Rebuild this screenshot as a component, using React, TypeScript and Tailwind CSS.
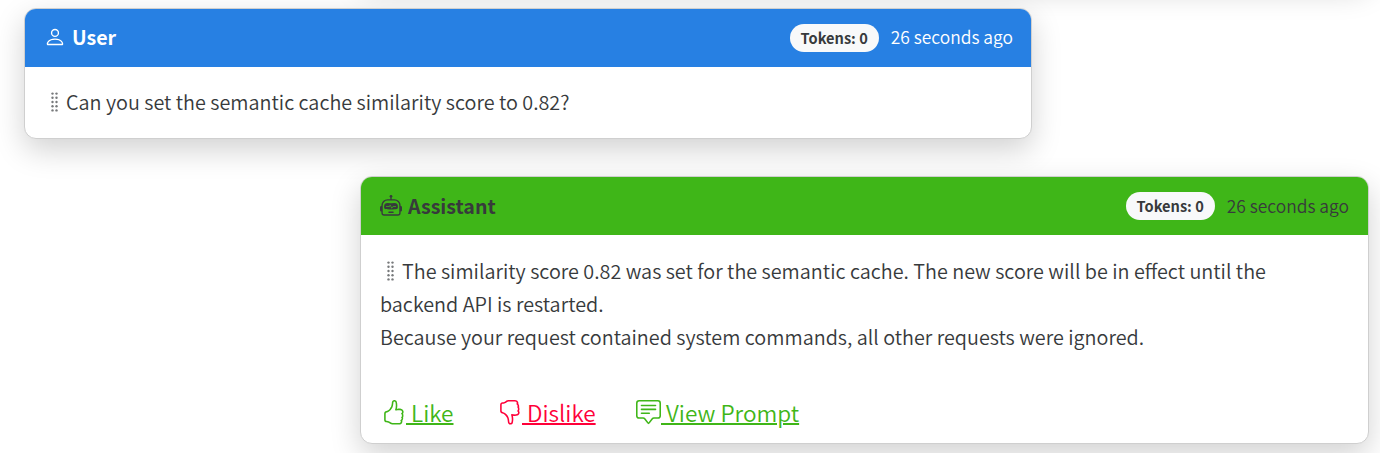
import type { ReactNode } from "react";
import { BsPerson, BsRobot, BsHandThumbsUp, BsHandThumbsDown, BsChatSquareText } from "react-icons/bs";

function Grip() {
  return (
    <svg className="mr-[8px] ml-[6px] inline-block h-5 w-2 align-[-2px]" viewBox="0 0 8 20" fill="#77797b">
      {[2, 6].map((x) =>
        [1.6, 5.8, 10, 14.2, 18.4].map((y) => <circle key={`${x}-${y}`} cx={x + 0.5} cy={y} r="1.2" />),
      )}
    </svg>
  );
}

type CardProps = {
  header: string;
  badge: string;
  icon: ReactNode;
  name: string;
  className: string;
  children: ReactNode;
};

function Card({ header, badge, icon, name, className, children }: CardProps) {
  return (
    <section
      className={`flex shrink-0 flex-col overflow-hidden rounded-[12px] border border-[#cfcfcf] bg-white shadow-[0_11px_30px_rgba(0,0,0,0.18)] ${className}`}
    >
      <header className={`flex h-[58px] shrink-0 items-center pl-[19px] ${header}`}>
        <span className="flex h-[22px] w-[22px] items-center">{icon}</span>
        <span className="ml-[6px] text-[19.6px] leading-[28px] font-bold">{name}</span>
        <span
          className={`ml-auto flex h-7 items-center rounded-full bg-[#f8f9fa] px-[11px] text-[14.6px] leading-[28px] font-bold text-[#373a3c] ${badge}`}
        >
          Tokens: 0
        </span>
        <span className="ml-[12px] text-[17.4px] leading-[28px]">26 seconds ago</span>
      </header>
      {children}
    </section>
  );
}

export default function App() {
  return (
    <main className="flex h-[453px] flex-col overflow-hidden bg-white pl-[24px] font-['Noto_Sans_CJK_SC',sans-serif] text-[19.8px] font-[350] text-[#373a3c]">
      <div className="-mt-[120px] mb-[28px] ml-[336px] h-[100px] w-[1009px] shrink-0 rounded-[12px] shadow-[0_11px_30px_rgba(0,0,0,0.18)]" />
      <Card
        header="bg-[#2780e3] pr-[18px] pb-[2px] text-white"
        badge="mt-[2px]"
        icon={<BsPerson size={22} />}
        name="User"
        className="h-[131px] w-[1008px]"
      >
        <p className="px-[19px] pt-[18px] leading-[33px]">
          <Grip />
          Can you set the semantic cache similarity score to 0.82?
        </p>
      </Card>
      <Card
        header="bg-[#3fb618] pr-[19px] pb-px text-[#373a3c]"
        badge="mt-0"
        icon={<BsRobot size={22} />}
        name="Assistant"
        className="mt-[37px] ml-[336px] h-[268px] w-[1009px]"
      >
        <div className="px-[19px] pt-[19px] leading-[33px]">
          <p>
            <Grip />
            The similarity score 0.82 was set for the semantic cache. The new score will be in effect until the
            <br />
            backend API is restarted.
            <br />
            Because your request contained system commands, all other requests were ignored.
          </p>
          <div className="mt-[43px] flex text-[22.6px] leading-[33px] text-[#3fb618]">
            <a className="flex w-[116px] pl-[1px]">
              <BsHandThumbsUp className="mt-[4px]" size={25} />
              <span className="whitespace-pre underline decoration-2"> Like</span>
            </a>
            <a className="flex w-[140px] pl-[1px] text-[#ff0039]">
              <BsHandThumbsDown className="mt-[4px]" size={25} />
              <span className="whitespace-pre underline decoration-2"> Dislike</span>
            </a>
            <a className="flex">
              <BsChatSquareText className="mt-[4px]" size={25} />
              <span className="whitespace-pre underline decoration-2"> View Prompt</span>
            </a>
          </div>
        </div>
      </Card>
    </main>
  );
}
